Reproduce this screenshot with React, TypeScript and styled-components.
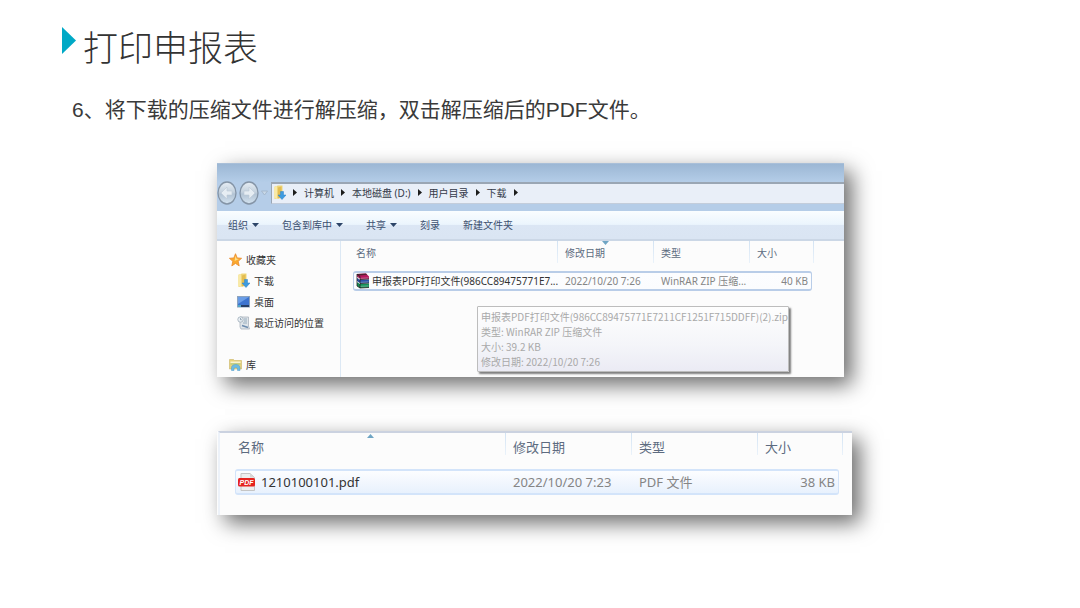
import React from "react";
import styled, { createGlobalStyle } from "styled-components";

const GlobalStyle = createGlobalStyle`
  *, *::before, *::after { box-sizing: border-box; }
  body {
    margin: 0;
    background: #ffffff;
    font-family: "Noto Sans", "Noto Sans CJK SC", sans-serif;
  }
`;

const Slide = styled.main`
  padding: 24px 0 48px;
`;

const Heading = styled.header`
  display: flex;
  align-items: flex-start;
  gap: 7px;
  padding: 0 62px;
`;

const Marker = styled.svg`
  flex: none;
  width: 14px;
  height: 27px;
  margin-top: 3px;
`;

const Title = styled.h1`
  margin: 0;
  color: #333333;
  font: 300 35px/44px "Noto Sans CJK SC", sans-serif;
`;

const Step = styled.p`
  margin: 26px 72px 0;
  color: #3a3a3a;
  font: 400 21px/32px "Liberation Sans", "Noto Sans CJK SC", sans-serif;
`;

const Figure = styled.section<{ $top: number; $right: number }>`
  margin: ${(p) => p.$top}px ${(p) => p.$right}px 0 217px;
  background: #fcfcfc;
  box-shadow: 8px 8px 20px rgba(0, 0, 0, 0.58);
`;

const TitleBar = styled.div`
  height: 19px;
  border-top: 1px solid #a9bfd8;
  background: linear-gradient(#9cb7d4, #b4cde8);
`;

const AddressRow = styled.div`
  display: flex;
  height: 29px;
  padding-bottom: 7px;
  background: #b5cde8;
`;

const NavButtons = styled.div`
  display: flex;
  align-items: center;
  width: 54px;
  flex: none;
`;

const NavButton = styled.button`
  width: 22px;
  height: 24px;
  padding: 0;
  border: 0;
  background: none;
  svg { display: block; }
`;

const HistoryButton = styled.button`
  width: 10px;
  padding: 0;
  border: 0;
  background: none;
  svg { display: block; }
`;

const AddressBar = styled.nav`
  display: flex;
  flex: 1;
  align-items: center;
  gap: 7px;
  padding: 0 0 2px 1px;
  border: solid #9aa6b4;
  border-width: 2px 0 1px 1px;
  border-bottom-color: #c3cddb;
  background: #e9eff8;
`;

const Crumb = styled.button`
  padding: 0;
  border: 0;
  background: none;
  color: #333a48;
  font: inherit;
  font-size: 10px;
  line-height: 16px;
  white-space: nowrap;
`;

const Toolbar = styled.div`
  display: flex;
  align-items: center;
  gap: 23px;
  height: 30px;
  padding-left: 11px;
  border-bottom: 2px solid #cbd7e6;
  background: linear-gradient(#fafdff 0, #ebf5fd 48%, #dbe6f4 50%, #dae5f3 100%);
`;

const ToolButton = styled.button`
  display: flex;
  align-items: center;
  gap: 4px;
  padding: 0;
  border: 0;
  background: none;
  color: #3c5070;
  font: inherit;
  font-size: 10px;
  line-height: 16px;
  white-space: nowrap;
`;

const Body = styled.div`
  display: flex;
`;

const Sidebar = styled.nav`
  flex: none;
  width: 124px;
  height: 136px;
  padding: 8px 0 0 12px;
  border-right: 1px solid #dce8f4;
`;

const Place = styled.a<{ $nested?: boolean; $apart?: boolean }>`
  display: flex;
  align-items: center;
  gap: 4px;
  height: 21px;
  margin-top: ${(p) => (p.$apart ? 21 : 0)}px;
  padding-left: ${(p) => (p.$nested ? 8 : 0)}px;
  color: #333333;
  font-size: 10px;
  text-decoration: none;
  white-space: nowrap;
`;

const Panel = styled.div`
  position: relative;
  flex: 1;
  min-width: 0;
  padding: 0 32px 0 12px;
`;

const DetailPanel = styled.div`
  height: 84px;
  margin-left: 1px;
  padding: 0 13px 0 15px;
  border-top: 2px solid #cbd2e0;
  border-left: 2px solid #edf2f9;
`;

const FileTable = styled.table<{ $size: number; $head: number; $row: number; $line: string }>`
  width: 100%;
  table-layout: fixed;
  border-spacing: 0;
  font-size: ${(p) => p.$size}px;
  line-height: 16px;
  white-space: nowrap;
  color: #858585;

  thead tr { height: ${(p) => p.$head}px; }

  td {
    height: ${(p) => p.$row}px;
    padding: 0 0 0 7px;
    border: solid ${(p) => p.$line};
    border-width: 2px 0;
    background: linear-gradient(#fcfdff, ${(p) => (p.$size > 10 ? "#e8f1fd" : "#fbfcfe")});
  }
  td:first-child {
    padding: 0 0 0 2px;
    border-left-width: 1px;
    border-radius: 3px 0 0 3px;
  }
  td:last-child {
    padding-right: 3px;
    border-right-width: 1px;
    border-radius: 0 3px 3px 0;
    text-align: right;
  }
`;

const HeaderCell = styled.th<{ $width?: number; $edge?: number; $roomy: boolean }>`
  position: relative;
  width: ${(p) => (p.$width ? `${p.$width}px` : "auto")};
  padding: ${(p) => (p.$roomy ? 6 : 4)}px 0 0 7px;
  text-align: left;
  vertical-align: top;
  font-weight: 400;

  &:first-child { padding-left: 3px; }

  &::after {
    content: "";
    position: absolute;
    top: 0;
    right: -${(p) => p.$edge ?? 0}px;
    width: 1px;
    height: 22px;
    background: linear-gradient(#d3e3f3, #eaf2fa);
  }
`;

const SortButton = styled.button`
  padding: 0;
  border: 0;
  background: none;
  color: #5d6b80;
  font: inherit;
`;

const SortMark = styled.svg`
  position: absolute;
  top: 0;
  left: calc(50% - 4px);
  width: 7px;
  height: 5px;
`;

const FileName = styled.div<{ $gap: number }>`
  display: flex;
  align-items: center;
  gap: ${(p) => p.$gap}px;
  color: #333333;
  svg { flex: none; }
`;

const Tooltip = styled.div`
  position: absolute;
  top: 65px;
  left: 136px;
  width: 312px;
  padding: 2px 3px;
  border: 1px solid #bdbdbd;
  border-radius: 1px;
  background: linear-gradient(#fefefe, #f4f5f9 60%, #ebebf4);
  box-shadow: 2px 2px 2px rgba(0, 0, 0, 0.5);
  color: #a9a9a9;
  font-family: "Noto Sans CJK SC", sans-serif;
  font-size: 10px;
  line-height: 15px;
  white-space: nowrap;
  p { margin: 0; }
`;

const Round = ({ back }: { back?: boolean }) => (
  <svg width="22" height="24" viewBox="0 0 22 24">
    <defs>
      <linearGradient id={back ? "rb" : "rf"} x1="0" y1="0" x2="0" y2="1">
        <stop offset="0" stopColor="#e7eef5" />
        <stop offset=".45" stopColor="#c5d2de" />
        <stop offset=".55" stopColor="#b2c3d4" />
        <stop offset="1" stopColor="#d5e4f1" />
      </linearGradient>
    </defs>
    <ellipse cx="10" cy="12" rx="9" ry="11" fill={`url(#${back ? "rb" : "rf"})`} stroke="#8494a6" strokeWidth="1.3" />
    <path
      d={back ? "M4 12l6-6v4h5v4h-5v4z" : "M16 12l-6-6v4H5v4h5v4z"}
      fill="#e6edf3"
      stroke="#bdcad6"
      strokeWidth=".6"
    />
  </svg>
);

const CrumbArrow = () => (
  <svg width="4" height="7" viewBox="0 0 4 7" aria-hidden="true"><path d="M0 0l4 3.500L0 7z" fill="#1d1d1d" /></svg>
);

const DropArrow = () => (
  <svg width="7" height="4" viewBox="0 0 7 4" aria-hidden="true"><path d="M0 0h7L3.500 4z" fill="#2d4568" /></svg>
);

const DownloadFolder = () => (
  <svg width="13" height="15" viewBox="0 0 13 15" aria-hidden="true">
    <path d="M1 2l4-1.500h4.500V13L2 14l-1-1z" fill="#efd578" />
    <path d="M1 2l3-1v13l-3-1z" fill="#f8e9a8" />
    <path d="M5 2.500l3.500-1V12L5 13.500z" fill="#e3bd52" />
    <path d="M7.500 6.500h3v3.500H13l-4 4.500-4-4.500h2.500z" fill="#3d9be0" stroke="#2c80c8" strokeWidth=".5" />
  </svg>
);

const Star = () => (
  <svg width="13" height="14" viewBox="0 0 13 14" aria-hidden="true">
    <path d="M6.500.7l1.700 4.200 4.400.4-3.400 3 1 4.600-3.700-2.500-3.700 2.500 1-4.600-3.400-3 4.400-.4z" fill="#fba92e" stroke="#e88a2d" strokeWidth=".8" />
    <path d="M6.500 2.800l1.100 3 2.400.3-4.400 2z" fill="#ffe08a" />
  </svg>
);

const Desktop = () => (
  <svg width="13" height="12" viewBox="0 0 13 12" aria-hidden="true">
    <rect x=".5" y=".5" width="12" height="10.500" fill="#3c73cf" stroke="#8da3bd" />
    <path d="M1 1h11L1 8z" fill="#6a9de6" />
    <path d="M1 9h11v2H1z" fill="#253e66" />
    <path d="M1 9h3v2H1z" fill="#51a7c7" />
  </svg>
);

const Recent = () => (
  <svg width="13" height="14" viewBox="0 0 13 14" aria-hidden="true">
    <path d="M3 1h8.500v9l1 3H4l-1-2z" fill="#dfe5ea" stroke="#a9b3bd" strokeWidth=".8" />
    <path d="M7 3h3M7 5h3M6 7h4" stroke="#8fa5b9" strokeWidth=".9" />
    <circle cx="3.500" cy="3.500" r="2.700" fill="#e9eff4" stroke="#a0adb9" strokeWidth=".8" />
    <path d="M3.500 2v1.700h1.300" fill="none" stroke="#74899e" strokeWidth=".7" />
    <path d="M5 9.500l6 2" stroke="#6d8cae" strokeWidth="1.500" />
  </svg>
);

const Library = () => (
  <svg width="13" height="13" viewBox="0 0 13 13" aria-hidden="true">
    <path d="M.5 1.500h4l1 1h7V11H.5z" fill="#e9d27a" stroke="#c9b566" strokeWidth=".6" />
    <path d="M1.500 3.500h10V5h-10z" fill="#f9f3cf" />
    <path d="M1.500 5h10v2h-10z" fill="#c5cf83" />
    <path d="M2.500 12.500V9.500c0-4 8.500-4 8.500 0v3H8.500V11c0-2-3.500-2-3.500 0v1.500z" fill="#6cbbe2" stroke="#4d9bc9" strokeWidth=".5" />
  </svg>
);

const Archive = () => (
  <svg width="14" height="16" viewBox="0 0 14 16" aria-hidden="true">
    <path d="M1 1l9-.5 3 3V6l-9 .5L1 4z" fill="#b3185d" />
    <path d="M1 1l9-.5 1.200 1.200L3 2.500z" fill="#55202f" />
    <path d="M1 5l3 2 9-.5V10l-9 .5L1 8.500z" fill="#2a52a8" />
    <path d="M1 9l3 2 9-.5v4l-9 .5-3-2z" fill="#149058" />
    <path d="M4 6.500l9-.5M4 10.500l9-.5M4 15l9-.5M1 1l3 2.500V15L1 13z" fill="none" stroke="#222" strokeWidth=".8" />
    <path d="M4.500 5.300l8-.4M4.500 9.300l8-.4M4.500 13.300l8-.4" stroke="#e5e5e5" strokeWidth=".4" />
    <path d="M1 4l3 2M1 8.500l3 2" stroke="#e0e0e0" strokeWidth=".8" />
  </svg>
);

const PdfFile = () => (
  <svg width="18" height="18" viewBox="0 0 18 18" aria-hidden="true">
    <path d="M3 .5h9l4.500 4v13H3z" fill="#eeeeee" stroke="#c5c5c5" />
    <path d="M12 .5v4h4.500z" fill="#d6d6d6" />
    <rect x="0" y="5" width="17" height="8.500" rx="1.500" fill="#e5231f" />
    <text x="1.500" y="12" fontFamily="Liberation Sans, sans-serif" fontSize="7" fontWeight="700" fontStyle="italic" fill="#fff">PDF</text>
  </svg>
);

const crumbs = ["计算机", "本地磁盘 (D:)", "用户目录", "下载"];

const tools = [
  { label: "组织", menu: true },
  { label: "包含到库中", menu: true },
  { label: "共享", menu: true },
  { label: "刻录" },
  { label: "新建文件夹" },
];

interface FileListProps {
  size: number;
  head: number;
  row: number;
  line: string;
  widths: number[];
  edge: number;
  sorted: number;
  ascending?: boolean;
  icon: React.ReactNode;
  cells: string[];
}

const columns = ["名称", "修改日期", "类型", "大小"];

const FileList = (p: FileListProps) => (
  <FileTable $size={p.size} $head={p.head} $row={p.row} $line={p.line}>
    <thead>
      <tr>
        {columns.map((name, i) => (
          <HeaderCell
            key={name}
            scope="col"
            $width={p.widths[i - 1]}
            $edge={i === 3 ? p.edge : 0}
            $roomy={p.size > 10}
          >
            <SortButton type="button">{name}</SortButton>
            {p.sorted === i && (
              <SortMark viewBox="0 0 7 5" aria-hidden="true">
                <path d={p.ascending ? "M0 5h7L3.500 1z" : "M0 0h7L3.500 4z"} fill="#6fa5c4" />
              </SortMark>
            )}
          </HeaderCell>
        ))}
      </tr>
    </thead>
    <tbody>
      <tr>
        {p.cells.map((cell, i) => (
          <td key={i}>
            {i === 0 ? (
              <FileName $gap={p.size > 10 ? 5 : 2}>
                {p.icon}
                <span>{cell}</span>
              </FileName>
            ) : (
              cell
            )}
          </td>
        ))}
      </tr>
    </tbody>
  </FileTable>
);

export default function App() {
  return (
    <>
      <GlobalStyle />
      <Slide lang="zh-CN">
        <Heading>
          <Marker viewBox="0 0 14 27" aria-hidden="true">
            <path d="M0 0l14 13.500L0 27z" fill="#00a9c6" />
          </Marker>
          <Title>打印申报表</Title>
        </Heading>
        <Step>6、将下载的压缩文件进行解压缩，双击解压缩后的PDF文件。</Step>

        <Figure $top={37} $right={236}>
          <TitleBar />
          <AddressRow>
            <NavButtons>
              <NavButton type="button" aria-label="后退"><Round back /></NavButton>
              <NavButton type="button" aria-label="前进"><Round /></NavButton>
              <HistoryButton type="button" aria-label="历史记录">
                <svg width="7" height="6" viewBox="0 0 7 6"><path d="M.5 1h6L3.500 5z" fill="#c9d9e8" stroke="#9fb3c8" strokeWidth=".8" /></svg>
              </HistoryButton>
            </NavButtons>
            <AddressBar aria-label="地址">
              <DownloadFolder />
              <CrumbArrow />
              {crumbs.map((name) => (
                <React.Fragment key={name}>
                  <Crumb type="button">{name}</Crumb>
                  <CrumbArrow />
                </React.Fragment>
              ))}
            </AddressBar>
          </AddressRow>
          <Toolbar>
            {tools.map((tool) => (
              <ToolButton type="button" key={tool.label}>
                {tool.label}
                {tool.menu && <DropArrow />}
              </ToolButton>
            ))}
          </Toolbar>
          <Body>
            <Sidebar>
              <Place href="#favorites"><Star />收藏夹</Place>
              <Place href="#downloads" $nested><DownloadFolder />下载</Place>
              <Place href="#desktop" $nested><Desktop />桌面</Place>
              <Place href="#recent" $nested><Recent />最近访问的位置</Place>
              <Place href="#library" $apart><Library />库</Place>
            </Sidebar>
            <Panel>
              <FileList
                size={10}
                head={30}
                row={20}
                line="#b9cde8"
                widths={[96, 96, 62]}
                edge={2}
                sorted={1}
                icon={<Archive />}
                cells={["申报表PDF打印文件(986CC89475771E7...", "2022/10/20 7:26", "WinRAR ZIP 压缩...", "40 KB"]}
              />
              <Tooltip role="tooltip">
                <p>申报表PDF打印文件(986CC89475771E7211CF1251F715DDFF)(2).zip</p>
                <p>类型: WinRAR ZIP 压缩文件</p>
                <p>大小: 39.2 KB</p>
                <p>修改日期: 2022/10/20 7:26</p>
              </Tooltip>
            </Panel>
          </Body>
        </Figure>

        <Figure $top={54} $right={228}>
          <DetailPanel>
            <FileList
              size={13}
              head={36}
              row={26}
              line="#d3e4fa"
              widths={[126, 126, 81]}
              edge={4}
              sorted={0}
              ascending
              icon={<PdfFile />}
              cells={["1210100101.pdf", "2022/10/20 7:23", "PDF 文件", "38 KB"]}
            />
          </DetailPanel>
        </Figure>
      </Slide>
    </>
  );
}
